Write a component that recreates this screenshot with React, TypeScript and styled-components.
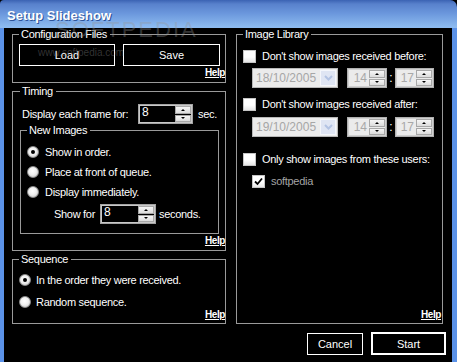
import React from 'react'
import styled, { createGlobalStyle } from 'styled-components'

const GlobalStyle = createGlobalStyle`
  html, body {
    margin: 0;
    padding: 0;
    background: #5b92e8;
  }
  body {
    font-family: "Liberation Sans", Arial, sans-serif;
  }
`

const Window = styled.div`
  position: relative;
  width: 457px;
  height: 362px;
  display: flex;
  flex-direction: column;
  overflow: hidden;
  background: #000;
`
const TitleBar = styled.div`
  height: 28px;
  flex: none;
  display: flex;
  align-items: center;
  box-sizing: border-box;
  padding: 3px 0 0 7px;
  border-top-right-radius: 7px;
  border-top-left-radius: 4px;
  background: linear-gradient(#3b63b3 0, #5881cc 4px, #6a96dc 13px, #8dbbf0 27px);
`
const Title = styled.span`
  color: #fff;
  font: bold 13px "Liberation Sans", Arial, sans-serif;
  text-shadow: 1px 1px 0 #2c5399;
`
const Body = styled.div`
  flex: 1;
  display: flex;
  flex-direction: column;
  border-left: 4px solid #5b92e8;
  border-right: 5px solid #5b92e8;
  padding: 0 9px 0 8px;
`
const Columns = styled.div`
  display: grid;
  grid-template-columns: 214px 207px;
  column-gap: 10px;
`
const LeftCol = styled.div`
  display: flex;
  flex-direction: column;
`
const Group = styled.fieldset<{ $mt?: number; $pl?: number; $mr?: number; $pb?: number; $pr?: number }>`
  margin: ${p => p.$mt ?? 0}px ${p => p.$mr ?? 0}px 0 0;
  padding: 0 ${p => p.$pr ?? 0}px ${p => p.$pb ?? 2}px ${p => p.$pl ?? 6}px;
  border: 1px solid #9a9a9a;
  min-width: 0;
  display: flex;
  flex-direction: column;
`
const Legend = styled.legend`
  padding: 0 3px 0 2px;
  color: #fff;
  font-size: 11px;
  letter-spacing: -0.3px;
  line-height: 13px;
`
const ButtonGrid = styled.div`
  display: grid;
  grid-template-columns: 96px 97px;
  column-gap: 8px;
  margin-top: 3px;
`
const Btn = styled.button<{ $w?: number; $default?: boolean }>`
  width: ${p => (p.$w ? `${p.$w}px` : 'auto')};
  height: ${p => (p.$default ? 23 : 22)}px;
  box-sizing: border-box;
  background: #000;
  color: #fff;
  border: ${p => (p.$default ? 2 : 1)}px solid #fff;
  font: 11px "Liberation Sans", Arial, sans-serif;
  padding: 0;
`
const Help = styled.a<{ $mt?: number; $lh?: number }>`
  align-self: flex-end;
  margin-top: ${p => p.$mt ?? 0}px;
  color: #fff;
  font-weight: bold;
  font-size: 10px;
  letter-spacing: -0.4px;
  line-height: ${p => p.$lh ?? 14}px;
  text-decoration: underline;
  cursor: pointer;
`
const Row = styled.div<{ $mt?: number; $indent?: number; $gap?: number }>`
  display: flex;
  align-items: center;
  height: 20px;
  margin-top: ${p => p.$mt ?? 0}px;
  margin-left: ${p => p.$indent ?? 0}px;
  gap: ${p => p.$gap ?? 0}px;
`
const Label = styled.span<{ $dim?: boolean; $w?: number; $ml?: number }>`
  color: ${p => (p.$dim ? '#a4a4a4' : '#fff')};
  font-size: 11px;
  letter-spacing: -0.3px;
  white-space: nowrap;
  ${p => (p.$w ? `width: ${p.$w}px; flex: none;` : '')}
  margin-left: ${p => p.$ml ?? 0}px;
`
const Radio = styled.span<{ $on?: boolean }>`
  position: relative;
  flex: none;
  width: 12px;
  height: 12px;
  box-sizing: border-box;
  border-radius: 50%;
  border: 1px solid #8c8c8c;
  background: radial-gradient(circle at 45% 40%, #fff 0, #f0f0f0 45%, #bdbdbd 100%);
  &::after {
    content: '';
    display: ${p => (p.$on ? 'block' : 'none')};
    position: absolute;
    left: 3px;
    top: 3px;
    width: 4px;
    height: 4px;
    border-radius: 50%;
    background: #000;
  }
`
const Check = styled.span`
  flex: none;
  width: 13px;
  height: 13px;
  box-sizing: border-box;
  border: 1px solid #c4c4c4;
  background: linear-gradient(#fff 55%, #e6e6e6);
  display: flex;
  align-items: center;
  justify-content: center;
`
const Spin = styled.div<{ $w: number; $off?: boolean }>`
  flex: none;
  width: ${p => p.$w}px;
  height: 20px;
  box-sizing: border-box;
  display: flex;
  padding: 1px;
  border: 1px solid ${p => (p.$off ? '#b0b0b0' : '#a4a4a4')};
  box-shadow: inset 0 0 0 1px ${p => (p.$off ? '#d0d0d0' : '#c8c8c8')};
  background: ${p => (p.$off ? '#ebebeb' : '#000')};
`
const SpinText = styled.span<{ $off?: boolean }>`
  flex: 1;
  padding: 0 2px;
  color: ${p => (p.$off ? '#a8a8a8' : '#fff')};
  text-align: ${p => (p.$off ? 'right' : 'left')};
  font-size: 12px;
  line-height: ${p => (p.$off ? 16 : 13)}px;
`
const Arrows = styled.div`
  flex: none;
  width: 16px;
  display: flex;
  flex-direction: column;
  gap: 1px;
`
const ArrowBtn = styled.span<{ $down?: boolean }>`
  flex: 1;
  box-sizing: border-box;
  border: 1px solid #a8a8a8;
  background: linear-gradient(#f6f6f6, #dcdcdc);
  display: flex;
  align-items: center;
  justify-content: center;
  &::before {
    content: '';
    border-left: 2px solid transparent;
    border-right: 2px solid transparent;
    ${p => (p.$down ? 'border-top: 2px solid #000;' : 'border-bottom: 2px solid #000;')}
  }
`
const DateBox = styled.div`
  flex: none;
  width: 86px;
  height: 20px;
  box-sizing: border-box;
  display: flex;
  border: 1px solid #b8b8b8;
  background: #ebebeb;
  padding: 1px;
`
const DateText = styled.span`
  flex: 1;
  padding-left: 2px;
  color: #a6a6a6;
  font-size: 12px;
  line-height: 16px;
`
const DropBtn = styled.span`
  width: 16px;
  box-sizing: border-box;
  border: 1px solid #f4f6fb;
  background: #dfe5f3;
  display: flex;
  align-items: center;
  justify-content: center;
`
const Colon = styled.span`
  color: #fff;
  font-size: 12px;
  width: 8px;
  text-align: center;
`
const Spacer = styled.div`
  flex: 1;
`
const Footer = styled.div`
  display: flex;
  justify-content: flex-end;
  align-items: center;
  gap: 8px;
  margin-top: 8px;
  margin-right: -3px;
`
const Watermark = styled.span<{ $x: number; $y: number; $size: number }>`
  position: absolute;
  left: ${p => p.$x}px;
  top: ${p => p.$y}px;
  font-size: ${p => p.$size}px;
  color: rgba(150, 150, 150, 0.35);
  letter-spacing: ${p => (p.$size > 15 ? 2 : 0)}px;
  pointer-events: none;
  white-space: nowrap;
`

const SpinBox: React.FC<{ value: string; w: number; off?: boolean }> = ({ value, w, off }) => (
  <Spin $w={w} $off={off}>
    <SpinText $off={off}>{value}</SpinText>
    <Arrows>
      <ArrowBtn />
      <ArrowBtn $down />
    </Arrows>
  </Spin>
)

const DateTime: React.FC<{ date: string }> = ({ date }) => (
  <Row $mt={0} $indent={9} $gap={0}>
    <DateBox>
      <DateText>{date}</DateText>
      <DropBtn>
        <svg width="9" height="6" viewBox="0 0 9 6">
          <path d="M1 1 L4.5 4.5 L8 1" fill="none" stroke="#b3c3e3" strokeWidth="2" />
        </svg>
      </DropBtn>
    </DateBox>
    <span style={{ width: 9 }} />
    <SpinBox value="14" w={40} off />
    <Colon>:</Colon>
    <SpinBox value="17" w={39} off />
  </Row>
)

const Tick = () => (
  <svg width="9" height="9" viewBox="0 0 9 9">
    <path d="M1 4.5 L3.5 7 L8 1.5" fill="none" stroke="#000" strokeWidth="1.8" />
  </svg>
)

export default function App() {
  return (
    <>
      <GlobalStyle />
      <Window>
        <TitleBar>
          <Title>Setup Slideshow</Title>
        </TitleBar>
        <Body>
          <Columns>
            <LeftCol>
              <Group>
                <Legend>Configuration Files</Legend>
                <ButtonGrid>
                  <Btn>Load</Btn>
                  <Btn>Save</Btn>
                </ButtonGrid>
                <Help>Help</Help>
              </Group>

              <Group $mt={2} $pl={7}>
                <Legend>Timing</Legend>
                <Row $mt={6} $indent={2}>
                  <Label $w={116}>Display each frame for:</Label>
                  <SpinBox value="8" w={55} />
                  <Label $ml={5}>sec.</Label>
                </Row>
                <Group $mr={6} $pb={9}>
                  <Legend>New Images</Legend>
                  <Row $mt={5} $gap={6}>
                    <Radio $on />
                    <Label>Show in order.</Label>
                  </Row>
                  <Row $gap={6}>
                    <Radio />
                    <Label>Place at front of queue.</Label>
                  </Row>
                  <Row $gap={6}>
                    <Radio />
                    <Label>Display immediately.</Label>
                  </Row>
                  <Row $mt={2} $indent={27}>
                    <Label $w={46}>Show for</Label>
                    <SpinBox value="8" w={56} />
                    <Label $ml={3}>seconds.</Label>
                  </Row>
                </Group>
                <Help>Help</Help>
              </Group>

              <Group $mt={2}>
                <Legend>Sequence</Legend>
                <Row $mt={4} $gap={5}>
                  <Radio $on />
                  <Label>In the order they were received.</Label>
                </Row>
                <Row $mt={2} $gap={5}>
                  <Radio />
                  <Label>Random sequence.</Label>
                </Row>
                <Help $mt={-3} $lh={12}>Help</Help>
              </Group>
            </LeftCol>

            <Group $pr={1}>
              <Legend>Image Library</Legend>
              <Row $mt={5} $gap={6}>
                <Check />
                <Label>Don't show images received before:</Label>
              </Row>
              <Row $mt={2}>
                <DateTime date="18/10/2005" />
              </Row>
              <Row $mt={6} $gap={6}>
                <Check />
                <Label>Don't show images received after:</Label>
              </Row>
              <Row $mt={3}>
                <DateTime date="19/10/2005" />
              </Row>
              <Row $mt={12} $gap={6}>
                <Check />
                <Label>Only show images from these users:</Label>
              </Row>
              <Row $mt={2} $indent={9} $gap={6}>
                <Check>
                  <Tick />
                </Check>
                <Label $dim>softpedia</Label>
              </Row>
              <Spacer />
              <Help $lh={12}>Help</Help>
            </Group>
          </Columns>
          <Footer>
            <Btn $w={56}>Cancel</Btn>
            <Btn $w={75} $default>
              Start
            </Btn>
          </Footer>
        </Body>
        <Watermark $x={55} $y={17} $size={22}>SOFTPEDIA</Watermark>
        <Watermark $x={38} $y={47} $size={10}>www.softpedia.com</Watermark>
      </Window>
    </>
  )
}
